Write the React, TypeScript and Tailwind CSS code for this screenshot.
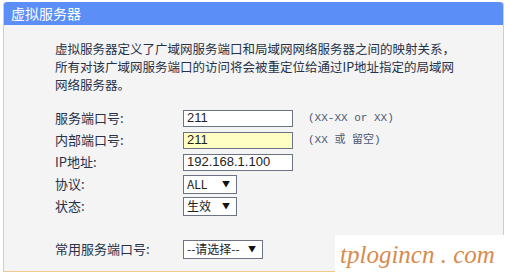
const Row = ({ label, children, hint }: { label: string; children: React.ReactNode; hint?: string }) => (
	<div className="flex flex-row items-center h-[22px]">
		<span className="w-[128px] shrink-0">{label}</span>
		<div className="w-[125px] shrink-0 flex items-center">{children}</div>
		{hint && (
			<span className="text-[11px] text-[#4a5877] font-['Liberation_Mono','Noto_Sans_CJK_SC',monospace] whitespace-pre">
				{hint}
			</span>
		)}
	</div>
);

const TextBox = ({ value, yellow }: { value: string; yellow?: boolean }) => (
	<div
		className={
			"w-[110px] h-[17px] border border-[#6b7385] flex items-center pl-[3px] text-[13px] text-[#222] font-['Liberation_Sans',sans-serif] " +
			(yellow ? "bg-[#ffffc4]" : "bg-white")
		}
	>
		{value}
	</div>
);

const Select = ({ value, width }: { value: string; width: string }) => (
	<div
		className={
			"h-[19px] border border-[#6b7385] bg-white flex flex-row items-center justify-between pl-[3px] pr-[6px] text-[12px] text-[#222] " +
			width
		}
	>
		<span>{value}</span>
		<span className="text-[8px] text-[#111]">▼</span>
	</div>
);

const App = () => {
	return (
		<div className="w-[510px] h-[275px] bg-white relative overflow-hidden font-['Noto_Sans_CJK_SC',sans-serif]">
			<div className="ml-[3px] mt-[2px] w-[501px] h-[270px] flex flex-col bg-[#f4f4f4] border-x border-b border-[#f0c98f] rounded-t-[3px]">
				<div className="h-[23px] bg-[#5b8ff7] rounded-t-[3px] flex items-center pl-[7px] text-[14px] text-white">
					虚拟服务器
				</div>
				<div className="flex flex-col pl-[51px] pt-[15px] text-[12.5px] text-[#26324a]">
					<div className="flex flex-col leading-[18px]">
						<span>虚拟服务器定义了广域网服务端口和局域网网络服务器之间的映射关系，</span>
						<span>所有对该广域网服务端口的访问将会被重定位给通过IP地址指定的局域网</span>
						<span>网络服务器。</span>
					</div>
					<div className="flex flex-col mt-[13px] text-[13px]">
						<Row label="服务端口号:" hint="(XX-XX or XX)">
							<TextBox value="211" />
						</Row>
						<Row label="内部端口号:" hint="(XX 或 留空)">
							<TextBox value="211" yellow />
						</Row>
						<Row label="IP地址:">
							<TextBox value="192.168.1.100" />
						</Row>
						<Row label="协议:">
							<Select value="ALL" width="w-[54px]" />
						</Row>
						<Row label="状态:">
							<Select value="生效" width="w-[54px]" />
						</Row>
						<div className="mt-[21px]">
							<Row label="常用服务端口号:">
								<Select value="--请选择--" width="w-[80px]" />
							</Row>
						</div>
					</div>
				</div>
			</div>
			<div className="absolute right-0 bottom-0 w-[175px] h-[40px] bg-white flex items-center pl-[5px] text-[25px] italic text-[#d98a4c] font-['Liberation_Serif',serif] whitespace-pre">
				tplogincn . com
			</div>
		</div>
	);
};

export default App;
